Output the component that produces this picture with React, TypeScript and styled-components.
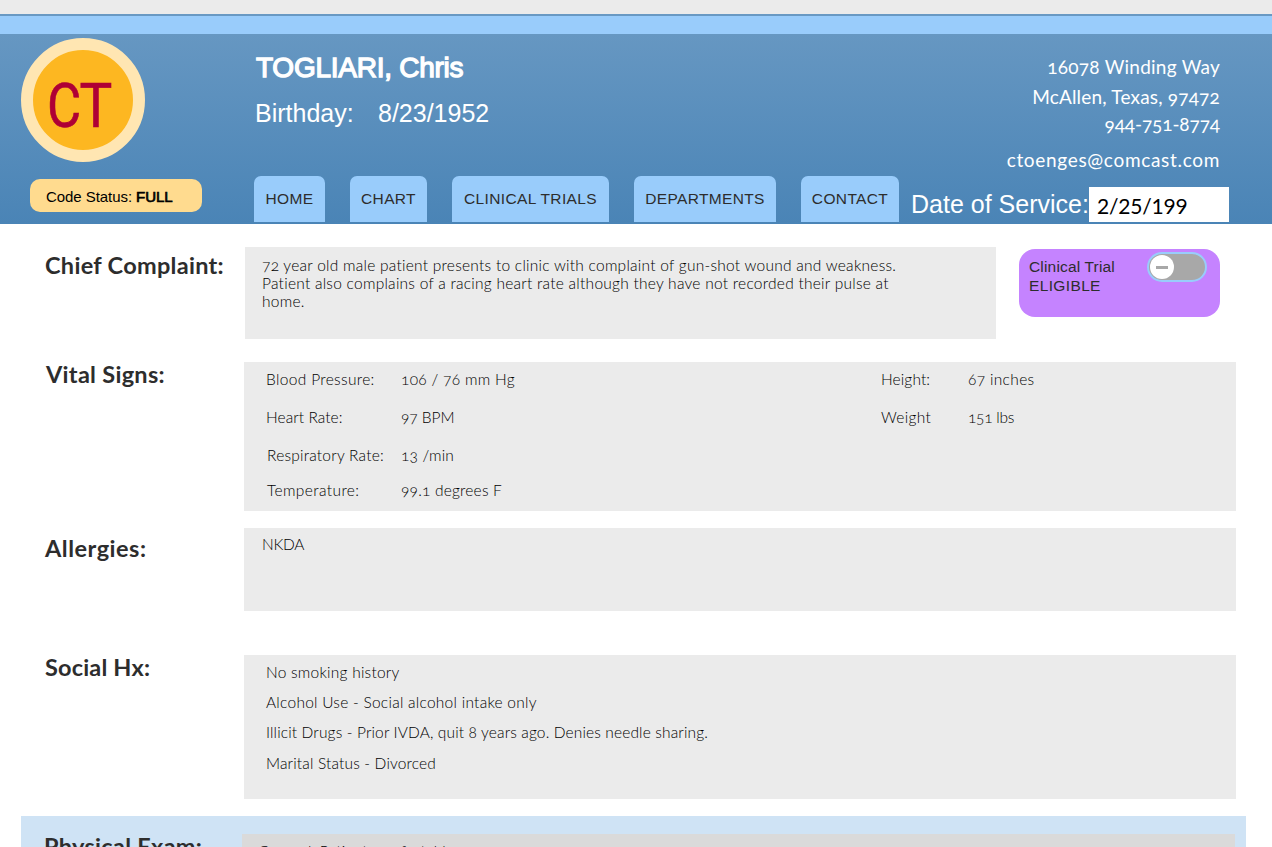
import React from 'react';
import styled, { createGlobalStyle } from 'styled-components';

const GlobalStyle = createGlobalStyle`
  * { box-sizing: border-box; }
  html, body { margin: 0; padding: 0; background: #fff; }
  body { height: 847px; overflow: hidden; font-family: Lato, sans-serif; color: #2d2d2d; }
  p, h1, h2 { margin: 0; }
`;

const Page = styled.div`
  width: 1272px;
  height: 847px;
  overflow: hidden;
`;

const TopStrip = styled.div`
  height: 14px;
  background: #ebebeb;
`;

const Header = styled.header`
  height: 210px;
  padding-top: 2px;
  background: linear-gradient(#6999c3, #4a84b6);
`;

const Ribbon = styled.div`
  height: 18px;
  background: #99ccfb;
`;

const HeaderBody = styled.div`
  display: grid;
  grid-template-columns: 254px 645px 1fr;
  height: 190px;
  color: #fff;
`;

const BrandColumn = styled.div`
  padding: 4px 0 0 21px;
`;

const Logo = styled.div`
  display: flex;
  justify-content: center;
  align-items: center;
  width: 124px;
  height: 124px;
  padding: 12px 7px 0 0;
  border: 12px solid #ffe6b2;
  border-radius: 50%;
  background: #fdb721;
  color: #af0035;
`;

const LogoLetter = styled.span<{ $stretch: number; $width: number }>`
  display: flex;
  justify-content: center;
  width: ${(p) => p.$width}px;
  font: 400 61px/60px Roboto, sans-serif;
  transform: scaleX(${(p) => p.$stretch});
  -webkit-text-stroke: 0.6px #af0035;
`;

const CodeStatus = styled.div`
  width: 172px;
  height: 33px;
  margin: 17px 0 0 9px;
  padding-left: 16px;
  border-radius: 10px;
  background: #ffdb8f;
  color: #000;
  font: 15px/35px 'Liberation Sans', Arial, sans-serif;
  letter-spacing: -0.06px;
`;

const Strong = styled.b`
  font-weight: 400;
  -webkit-text-stroke: 0.7px currentColor;
`;

const PatientColumn = styled.div`
  display: flex;
  flex-direction: column;
  font-family: 'Liberation Sans', Arial, sans-serif;
`;

const PatientName = styled.h1`
  margin-top: 18px;
  padding-left: 2px;
  font-size: 28px;
  line-height: 32px;
  font-weight: 400;
  letter-spacing: -0.25px;
  -webkit-text-stroke: 1.3px #fff;
`;

const Birthday = styled.div`
  display: flex;
  margin-top: 14px;
  padding-left: 1px;
  font-size: 25px;
  line-height: 30px;
`;

const BirthdayLabel = styled.span`
  width: 123px;
`;

const Nav = styled.nav`
  display: flex;
  gap: 25px;
  margin-top: auto;
  padding-bottom: 2px;
`;

const Tab = styled.a<{ $width: number }>`
  width: ${(p) => p.$width}px;
  height: 46px;
  border-radius: 7px 7px 0 0;
  background: #99ccfb;
  color: #2d2d2d;
  font-size: 15.5px;
  line-height: 46px;
  letter-spacing: 0.36px;
  text-align: center;
`;

const ContactColumn = styled.div`
  display: flex;
  flex-direction: column;
  padding: 19px 43px 0 11px;
`;

const ContactLine = styled.p<{ $gap?: number; $spacing: number }>`
  margin: ${(p) => p.$gap || 0}px 9px 0 0;
  font-size: 19px;
  line-height: 28px;
  font-variant-numeric: oldstyle-nums;
  letter-spacing: ${(p) => p.$spacing}px;
  text-align: right;
`;

const ServiceDate = styled.label`
  display: flex;
  height: 35px;
  margin: auto 0 2px;
  font: 25px/35px 'Liberation Sans', Arial, sans-serif;
`;

const ServiceLabel = styled.span`
  width: 179px;
  padding-left: 1px;
  white-space: nowrap;
`;

const DateField = styled.span`
  width: 140px;
  padding-left: 8px;
  background: #fff;
  color: #000;
  font: 21px/37px Lato, sans-serif;
  letter-spacing: -0.2px;
`;

const Section = styled.section<{ $gap: number; $height: number }>`
  display: grid;
  grid-template-columns: 244px 1fr;
  height: ${(p) => p.$height}px;
  margin: ${(p) => p.$gap}px 36px 0 0;
`;

const SectionTitle = styled.h2<{ $top?: number; $left?: number; $spacing?: number }>`
  margin-top: ${(p) => p.$top ?? 0}px;
  padding-left: ${(p) => p.$left ?? 45}px;
  font-size: 23.5px;
  line-height: 28px;
  font-weight: 700;
  letter-spacing: ${(p) => p.$spacing ?? 0.29}px;
  white-space: nowrap;
`;

const Panel = styled.div<{ $indent?: number; $top?: number }>`
  padding: ${(p) => p.$top ?? 7}px 0 0 ${(p) => p.$indent ?? 22}px;
  background: #ebebeb;
  color: #000;
  font-size: 15.5px;
  font-weight: 300;
  line-height: 20px;
  letter-spacing: 0.18px;
  font-variant-numeric: oldstyle-nums;
`;

const ComplaintRow = styled.div`
  display: grid;
  grid-template-columns: 751px 201px;
  gap: 23px;
  padding-left: 1px;
`;

const ComplaintPanel = styled(Panel)`
  line-height: 18px;
  letter-spacing: 0.255px;
  white-space: nowrap;
`;

const TrialCard = styled.aside`
  display: flex;
  justify-content: space-between;
  height: 68px;
  margin-top: 2px;
  padding: 3px 13px 0 10px;
  border-radius: 16px;
  background: #c583ff;
  font: 15.5px/19px 'Liberation Sans', Arial, sans-serif;
`;

const TrialText = styled.p<{ $spacing: number }>`
  letter-spacing: ${(p) => p.$spacing}px;
`;

const TrialLabel = styled.div`
  padding-top: 5px;
`;

const Toggle = styled.div`
  width: 60px;
  height: 30px;
  padding: 1px;
  border: 2px solid #99ccfb;
  border-radius: 15px;
  background: #a8a8a8;
`;

const Knob = styled.div`
  display: flex;
  align-items: center;
  justify-content: center;
  width: 24px;
  height: 24px;
  border-radius: 50%;
  background: #fff;
`;

const Minus = styled.div`
  width: 12px;
  height: 3px;
  background: #a8a8a8;
`;

const VitalRow = styled.div<{ $gap?: number; $shift?: number }>`
  display: grid;
  grid-template-columns: ${(p) => 135 - (p.$shift ?? 0)}px 480px 87px auto;
  margin-top: ${(p) => p.$gap ?? 0}px;
  padding-left: ${(p) => p.$shift ?? 0}px;
  white-space: nowrap;
`;

const Value = styled.span<{ $spacing?: number }>`
  letter-spacing: ${(p) => p.$spacing ?? 0.18}px;
`;

const HistoryLine = styled.p<{ $gap?: number; $spacing: number }>`
  margin-top: ${(p) => p.$gap ?? 0}px;
  letter-spacing: ${(p) => p.$spacing}px;
`;

const ExamBand = styled.section`
  display: grid;
  grid-template-columns: 221px 993px;
  height: 200px;
  margin: 17px 26px 0 21px;
  padding-top: 18px;
  background: #cfe3f5;
`;

const ExamPanel = styled(Panel)`
  background: #dadada;
`;

export default function App() {
  return (
    <Page>
      <GlobalStyle />
      <TopStrip />
      <Header>
        <Ribbon />
        <HeaderBody>
          <BrandColumn>
            <Logo>
              <LogoLetter $width={32} $stretch={0.86}>C</LogoLetter>
              <LogoLetter $width={32} $stretch={0.9}>T</LogoLetter>
            </Logo>
            <CodeStatus>
              Code Status: <Strong>FULL</Strong>
            </CodeStatus>
          </BrandColumn>
          <PatientColumn>
            <PatientName>TOGLIARI, Chris</PatientName>
            <Birthday>
              <BirthdayLabel>Birthday:</BirthdayLabel>
              <span>8/23/1952</span>
            </Birthday>
            <Nav>
              <Tab $width={71}>HOME</Tab>
              <Tab $width={77}>CHART</Tab>
              <Tab $width={157}>CLINICAL TRIALS</Tab>
              <Tab $width={142}>DEPARTMENTS</Tab>
              <Tab $width={98}>CONTACT</Tab>
            </Nav>
          </PatientColumn>
          <ContactColumn>
            <ContactLine $spacing={0.24}>16078 Winding Way</ContactLine>
            <ContactLine $gap={2} $spacing={0.19}>McAllen, Texas, 97472</ContactLine>
            <ContactLine $gap={-1} $spacing={-0.1}>944-751-8774</ContactLine>
            <ContactLine $gap={8} $spacing={0.68}>ctoenges@comcast.com</ContactLine>
            <ServiceDate>
              <ServiceLabel>Date of Service:</ServiceLabel>
              <DateField>2/25/199</DateField>
            </ServiceDate>
          </ContactColumn>
        </HeaderBody>
      </Header>

      <Section $gap={23} $height={92}>
        <SectionTitle $top={4}>Chief Complaint:</SectionTitle>
        <ComplaintRow>
          <ComplaintPanel $indent={17} $top={9}>
            <p>72 year old male patient presents to clinic with complaint of gun-shot wound and weakness.</p>
            <p>Patient also complains of a racing heart rate although they have not recorded their pulse at</p>
            <p>home.</p>
          </ComplaintPanel>
          <TrialCard>
            <TrialLabel>
              <TrialText $spacing={0.17}>Clinical Trial</TrialText>
              <TrialText $spacing={0.36}>ELIGIBLE</TrialText>
            </TrialLabel>
            <Toggle>
              <Knob>
                <Minus />
              </Knob>
            </Toggle>
          </TrialCard>
        </ComplaintRow>
      </Section>

      <Section $gap={23} $height={149}>
        <SectionTitle $top={-2} $left={46}>Vital Signs:</SectionTitle>
        <Panel $indent={22}>
          <VitalRow>
            <Value $spacing={0.34}>Blood Pressure:</Value>
            <Value $spacing={0.3}>106 / 76 mm Hg</Value>
            <Value $spacing={0.12}>Height:</Value>
            <Value $spacing={0.34}>67 inches</Value>
          </VitalRow>
          <VitalRow $gap={18}>
            <Value $spacing={0.06}>Heart Rate:</Value>
            <Value $spacing={-0.05}>97 BPM</Value>
            <Value $spacing={0.34}>Weight</Value>
            <Value $spacing={-0.25}>151 lbs</Value>
          </VitalRow>
          <VitalRow $gap={18} $shift={1}>
            <Value $spacing={0.22}>Respiratory Rate:</Value>
            <Value>13 /min</Value>
          </VitalRow>
          <VitalRow $gap={15} $shift={1}>
            <Value $spacing={0.4}>Temperature:</Value>
            <Value $spacing={0.2}>99.1 degrees F</Value>
          </VitalRow>
        </Panel>
      </Section>

      <Section $gap={17} $height={83}>
        <SectionTitle $top={6} $spacing={0.5}>Allergies:</SectionTitle>
        <Panel $indent={18} $top={6}>
          <Value $spacing={-0.3}>NKDA</Value>
        </Panel>
      </Section>

      <Section $gap={44} $height={144}>
        <SectionTitle $top={-2} $spacing={0.17}>Social Hx:</SectionTitle>
        <Panel>
          <HistoryLine $spacing={0.24}>No smoking history</HistoryLine>
          <HistoryLine $gap={10} $spacing={0.26}>Alcohol Use - Social alcohol intake only</HistoryLine>
          <HistoryLine $gap={10} $spacing={0.14}>Illicit Drugs - Prior IVDA, quit 8 years ago. Denies needle sharing.</HistoryLine>
          <HistoryLine $gap={11} $spacing={0.16}>Marital Status - Divorced</HistoryLine>
        </Panel>
      </Section>

      <ExamBand>
        <SectionTitle $top={-2} $left={23}>Physical Exam:</SectionTitle>
        <ExamPanel $indent={16}>General: Patient comfortable.</ExamPanel>
      </ExamBand>
    </Page>
  );
}
